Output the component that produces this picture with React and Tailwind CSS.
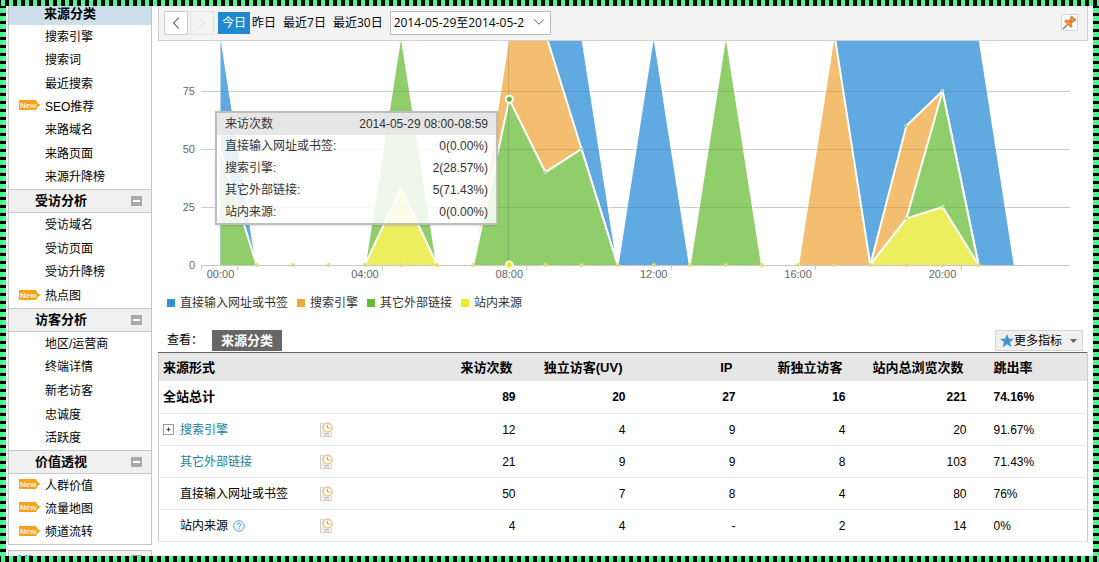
import { useState } from "react";
import { ChevronLeft, ChevronRight, ChevronDown } from "lucide-react";

const menu = [
  {
    title: "来源分类",
    active: true,
    listHeight: "h-[164px]",
    items: [
      { name: "搜索引擎" },
      { name: "搜索词" },
      { name: "最近搜索" },
      { name: "SEO推荐", isNew: true },
      { name: "来路域名" },
      { name: "来路页面" },
      { name: "来源升降榜" },
    ],
  },
  {
    title: "受访分析",
    listHeight: "h-[95px]",
    items: [
      { name: "受访域名" },
      { name: "受访页面" },
      { name: "受访升降榜" },
      { name: "热点图", isNew: true },
    ],
  },
  {
    title: "访客分析",
    listHeight: "h-[118px]",
    items: [
      { name: "地区/运营商" },
      { name: "终端详情" },
      { name: "新老访客" },
      { name: "忠诚度" },
      { name: "活跃度" },
    ],
  },
  {
    title: "价值透视",
    listHeight: "h-[70px]",
    items: [
      { name: "人群价值", isNew: true },
      { name: "流量地图", isNew: true },
      { name: "频道流转", isNew: true },
    ],
  },
];

const legend = [
  { name: "直接输入网址或书签", color: "bg-[#3490d6]" },
  { name: "搜索引擎", color: "bg-[#eda745]" },
  { name: "其它外部链接", color: "bg-[#68bb35]" },
  { name: "站内来源", color: "bg-[#ecec2c]" },
];

const tooltipRows = [
  ["直接输入网址或书签:", "0(0.00%)"],
  ["搜索引擎:", "2(28.57%)"],
  ["其它外部链接:", "5(71.43%)"],
  ["站内来源:", "0(0.00%)"],
];

const rows = [
  { name: "搜索引擎", link: true, expand: true, values: ["12", "4", "9", "4", "20", "91.67%"] },
  { name: "其它外部链接", link: true, values: ["21", "9", "9", "8", "103", "71.43%"] },
  { name: "直接输入网址或书签", values: ["50", "7", "8", "4", "80", "76%"] },
  { name: "站内来源", help: true, values: ["4", "4", "-", "2", "14", "0%"] },
];

const total = ["89", "20", "27", "16", "221", "74.16%"];
const columns = ["来访次数", "独立访客(UV)", "IP", "新独立访客", "站内总浏览次数", "跳出率"];

// stacked percentages, each point is [hour, top of the layer]
const layers = [
  { fill: "#61a9e1", points: [[0, 100], [1, 0]] },
  { fill: "#61a9e1", points: [[9, 100], [10, 100], [11, 0]] },
  { fill: "#61a9e1", points: [[11, 0], [12, 100], [13, 0]] },
  { fill: "#61a9e1", points: [[16, 0], [17, 100], [21, 100], [22, 0]] },
  { fill: "#f3be70", points: [[7, 0], [8, 100], [9, 100], [10, 50], [11, 0]] },
  { fill: "#f3be70", points: [[16, 0], [17, 100], [18, 0]] },
  { fill: "#f3be70", points: [[18, 0], [19, 60], [20, 75], [21, 0]] },
  { fill: "#90ce6b", points: [[0, 50], [1, 0]] },
  { fill: "#90ce6b", points: [[4, 0], [5, 100], [6, 0]] },
  { fill: "#90ce6b", points: [[7, 0], [8, 71.43], [9, 40], [10, 50], [11, 0]] },
  { fill: "#90ce6b", points: [[13, 0], [14, 100], [15, 0]] },
  { fill: "#90ce6b", points: [[18, 0], [19, 20], [20, 75], [21, 0]] },
  { fill: "#ecee5d", points: [[4, 0], [5, 33.3], [6, 0]] },
  { fill: "#ecee5d", points: [[18, 0], [19, 20], [20, 25], [21, 0]] },
];

const px = (hour) => 62.5 + hour * 36.1;
const py = (value) => 224 - value * 2.32;

function GridLines({ opacity }) {
  return [25, 50, 75].map((v) => (
    <line key={v} x1="43" x2="912" y1={Math.round(py(v)) + 0.5} y2={Math.round(py(v)) + 0.5} stroke="#000" strokeOpacity={opacity} />
  ));
}

function TrafficChart() {
  const line = (points) => points.map(([h, v]) => `${px(h)},${py(v)}`).join(" ");
  const area = (points) =>
    `${px(points[0][0])},${py(0)} ${line(points)} ${px(points[points.length - 1][0])},${py(0)}`;

  return (
    <svg viewBox="0 0 930 244" className="block w-full" role="img" aria-label="来访次数">
      <GridLines opacity="0.12" />
      {layers.map((layer, i) => (
        <g key={i}>
          <polygon points={area(layer.points)} fill={layer.fill} />
          <polyline points={line(layer.points)} fill="none" stroke="#fff" strokeWidth="2" />
        </g>
      ))}
      <GridLines opacity="0.1" />

      <line x1="43" x2="912" y1="224.5" y2="224.5" stroke="#c8c8c8" />
      <line x1="350.5" x2="350.5" y1="0" y2="224" stroke="#000" strokeOpacity="0.12" />

      {[43.5, 79.5, 224.5, 368.5, 513.5, 657.5, 803.5].map((x) => (
        <line key={x} x1={x} x2={x} y1="224" y2="229" stroke="#c8c8c8" />
      ))}

      {Array.from({ length: 21 }, (_, i) => (
        <circle key={i} cx={px(i + 1)} cy="224" r="2" fill="#e6d97c" />
      ))}

      {[[9, 40], [10, 50], [19, 60], [19, 20], [20, 75], [20, 25]].map(([h, v]) => (
        <circle key={`${h}-${v}`} cx={px(h)} cy={py(v)} r="1.5" fill="#9bcb7a" stroke="#fff" strokeOpacity="0.6" />
      ))}

      <circle cx={px(8)} cy={py(71.43)} r="3.5" fill="#63b438" stroke="#fff" strokeWidth="2" />
      <circle cx={px(8)} cy="224" r="3.5" fill="#e9e920" stroke="#fffde0" strokeWidth="2" />

      <g fill="#666" fontSize="11" fontFamily="Liberation Sans, sans-serif">
        {[0, 25, 50, 75].map((v) => (
          <text key={v} x="37" y={Math.round(py(v)) + 4} textAnchor="end">{v}</text>
        ))}
        {[0, 4, 8, 12, 16, 20].map((h) => (
          <text key={h} x={px(h)} y="237" textAnchor="middle">{`${String(h).padStart(2, "0")}:00`}</text>
        ))}
      </g>
    </svg>
  );
}

function NewBadge() {
  return (
    <svg width="22" height="11" viewBox="0 0 22 11" className="mb-0.5" aria-label="New">
      <path d="M0 0H17L19 3.5L22 5L19 6.5L17 10H0Z" fill="#f6a21d" />
      <text x="1" y="8" fontSize="8" fontWeight="bold" fill="#fff4d8" fontFamily="Liberation Sans, sans-serif">New</text>
    </svg>
  );
}

function HistoryIcon() {
  return (
    <svg width="13" height="16" viewBox="0 0 13 16" fill="none" aria-hidden="true">
      <path d="M3.5 1.5H0.5V14.5H11.5V10.5" stroke="#d3cac3" />
      <path d="M2.5 13V3" stroke="#e3dcd6" />
      <path d="M4 11.5H9M4 13H9" stroke="#cbbfb6" />
      <circle cx="7.5" cy="5.5" r="4.5" fill="#fff8ec" stroke="#ecc592" strokeWidth="1.4" />
      <path d="M7.5 3V6H9.8" stroke="#d9985a" />
    </svg>
  );
}

function Collapse() {
  return (
    <svg width="11" height="10" viewBox="0 0 11 10" aria-hidden="true">
      <rect width="11" height="10" fill="#a9a9a9" />
      <rect x="2" y="4" width="7" height="2" fill="#fff" />
    </svg>
  );
}

function Sidebar() {
  return (
    <aside className="w-36 shrink-0">
      <nav className="border-x border-b border-[#c4c4c4]">
        {menu.map((section) => (
          <section key={section.title}>
            {section.active ? (
              <h2 className="h-[19px] bg-[#cddfea] pl-[35px] text-[13px] leading-[15px] font-bold">{section.title}</h2>
            ) : (
              <h2 className="flex h-6 items-center justify-between border-y border-[#c8c8c8] bg-[#f0f0f0] pr-[9px] pl-[26px] text-[13px] font-bold">
                {section.title}
                <button type="button" aria-label={`收起${section.title}`}><Collapse /></button>
              </h2>
            )}
            <ul className={`grid auto-rows-fr ${section.listHeight}`}>
              {section.items.map((item) => (
                <li key={item.name} className="flex items-center pl-2.5">
                  <span className="w-[26px] shrink-0">{item.isNew && <NewBadge />}</span>
                  <a href="#" className="leading-4">{item.name}</a>
                </li>
              ))}
            </ul>
          </section>
        ))}
      </nav>
      <div className="mt-[5px] flex h-6 justify-between border border-[#c4c4c4] bg-[#f0f0f0] px-[9px] pt-1">
        <svg width="16" height="12" viewBox="0 0 16 12" fill="none" stroke="#3a9bd0" strokeWidth="2" aria-hidden="true">
          <path d="M1 0L5 4L9 0M9 4L13 0" />
        </svg>
        <Collapse />
      </div>
    </aside>
  );
}

function Toolbar() {
  const [range, setRange] = useState("今日");
  const ranges = ["今日", "昨日", "最近7日", "最近30日"];

  return (
    <div className="flex h-[35px] items-center border-x border-b border-[#d0d0d0] bg-[#f3f3f3] pr-[9px] pl-[5px] font-['Open_Sans','Noto_Sans_CJK_SC',sans-serif]">
      <button type="button" aria-label="前一天" className="flex h-6 w-6 items-center justify-center border border-[#ccc] bg-white text-[#444]">
        <ChevronLeft size={20} strokeWidth={1.25} />
      </button>
      <button type="button" aria-label="后一天" disabled className="ml-0.5 flex h-6 w-6 items-center justify-center border border-[#e2e2e2] text-[#ddd]">
        <ChevronRight size={20} strokeWidth={1.25} />
      </button>
      <div className="ml-1 flex">
        {ranges.map((name) => (
          <button
            key={name}
            type="button"
            onClick={() => setRange(name)}
            className={`h-[22px] leading-[22px] ${range === name ? "mr-0.5 bg-[#2189d2] px-1 text-white" : "mr-[7px]"}`}
          >
            {name}
          </button>
        ))}
      </div>
      <div className="relative w-[161px]">
        <select aria-label="日期范围" className="h-6 w-full appearance-none border border-[#bbb] bg-white pl-[3px] text-xs">
          <option>2014-05-29至2014-05-2</option>
        </select>
        <ChevronDown size={18} strokeWidth={1.25} className="pointer-events-none absolute top-0.5 right-[3px] text-[#444]" />
      </div>
      <button type="button" aria-label="固定" className="mb-0.5 ml-auto border border-[#d3d9de] bg-white">
        <svg width="15" height="15" viewBox="0 0 15 15" aria-hidden="true">
          <path d="M1 14L5.5 9.5" stroke="#8a6a50" strokeWidth="1.3" />
          <path d="M9.5 1L14 5L12.5 6.2L11.5 6L9.5 8.5L10 11.5L9 12.5L6 9.5L2.5 6L4 5L6.8 5.4L9 3.2L8.4 2Z" fill="#ee7f22" stroke="#c9621a" strokeWidth="0.6" />
          <path d="M5 6.4L8.6 9.8M9.8 3.5L11.6 5.3" stroke="#fbc68c" strokeWidth="0.8" />
        </svg>
      </button>
    </div>
  );
}

function Tooltip() {
  return (
    <div className="absolute top-[70px] left-[57px] w-[283px] border-2 border-[#bdbdbd] bg-white/85 text-[#333] shadow-sm">
      <div className="flex h-[22px] items-center justify-between bg-[#e6e6e6] px-2">
        <span>来访次数</span>
        <span>2014-05-29 08:00-08:59</span>
      </div>
      {tooltipRows.map(([name, value]) => (
        <div key={name} className="flex h-[22px] items-center justify-between px-2">
          <span>{name}</span>
          <span>{value}</span>
        </div>
      ))}
    </div>
  );
}

function SourceTable() {
  return (
    <table className="w-full table-fixed border-x border-t border-x-[#ccc] border-t-[#666] text-right">
      <colgroup>
        <col />
        <col className="w-[106px]" />
        <col className="w-[110px]" />
        <col className="w-[110px]" />
        <col className="w-[110px]" />
        <col className="w-[110px]" />
        <col className="w-[121px]" />
        <col className="w-[110px]" />
      </colgroup>
      <thead>
        <tr className="h-7 bg-[#e6e6e6] text-[13px]">
          <th colSpan={2} className="pt-0.5 pl-1 text-left">来源形式</th>
          {columns.map((name, i) => (
            <th key={name} className={i === 5 ? "pt-0.5 pl-4 text-left" : "pt-0.5 pr-3.5"}>{name}</th>
          ))}
        </tr>
      </thead>
      <tbody>
        <tr className="h-[33px] border-b border-[#e8e8e8] font-bold">
          <th colSpan={2} scope="row" className="pl-1 text-left text-[13px]">全站总计</th>
          {total.map((value, i) => (
            <td key={i} className={i === 5 ? "pl-4 text-left" : "pr-[11px]"}>{value}</td>
          ))}
        </tr>
        {rows.map((row) => (
          <tr key={row.name} className="h-8 border-b border-[#e8e8e8]">
            <th scope="row" className="text-left font-normal">
              <div className="flex items-center pl-1">
                <span className="w-[17px] shrink-0">
                  {row.expand && (
                    <button type="button" aria-label="展开" className="block">
                      <svg width="11" height="11" viewBox="0 0 11 11" fill="none" stroke="#999">
                        <rect x="0.5" y="0.5" width="10" height="10" />
                        <path d="M3.5 5.5H7.5M5.5 3.5V7.5" stroke="#444" />
                      </svg>
                    </button>
                  )}
                </span>
                {row.link ? <a href="#" className="text-[#18829f]">{row.name}</a> : row.name}
                {row.help && (
                  <svg width="12" height="12" viewBox="0 0 12 12" fill="none" className="ml-[5px]" aria-label="帮助">
                    <circle cx="6" cy="6" r="5.3" fill="#eef7fd" stroke="#63a8d8" />
                    <path d="M4.3 4.8C4.3 2.6 7.8 2.7 7.7 4.7C7.6 5.9 6 5.8 6 7.4M6 8.4V9.5" stroke="#3f86c0" />
                  </svg>
                )}
              </div>
            </th>
            <td className="pl-2.5"><HistoryIcon /></td>
            {row.values.map((value, i) => (
              <td key={i} className={i === 5 ? "pl-4 text-left" : "pr-[11px]"}>{value}</td>
            ))}
          </tr>
        ))}
      </tbody>
    </table>
  );
}

function App() {
  return (
    <div className="flex h-screen flex-col overflow-hidden bg-white font-['Liberation_Sans','Noto_Sans_CJK_SC',sans-serif] text-xs text-black">
      <div className="h-1.5 shrink-0 bg-[repeating-linear-gradient(90deg,#000_0_1px,#4df58f_1px_5px,#000_5px_8px)]" />
      <div className="flex min-h-0 flex-1">
        <div className="w-1.5 shrink-0 bg-[repeating-linear-gradient(180deg,#000_0_2px,#4df58f_2px_7px,#000_7px_8px)]" />
        <div className="flex min-w-0 flex-1 gap-1.5 overflow-hidden pr-[5px] pl-0.5">
          <Sidebar />
          <main className="min-w-0 flex-1">
            <Toolbar />
            <div className="relative">
              <TrafficChart />
              <Tooltip />
            </div>
            <ul className="flex h-9 items-center gap-[9px] pl-[9px] text-[#333]">
              {legend.map((item) => (
                <li key={item.name} className="flex items-center gap-[5px]">
                  <span className={`h-2 w-2 ${item.color}`} />
                  {item.name}
                </li>
              ))}
            </ul>
            <div className="flex h-[31px] items-end pr-[5px] pb-px pl-[9px]">
              <span className="w-[45px] leading-[21px]">查看：</span>
              <button type="button" className="h-[21px] bg-[#666] px-[9px] text-[13px] font-bold text-white">来源分类</button>
              <button type="button" className="ml-auto flex h-[21px] items-center border border-[#d4d4d4] bg-[#f0f0f0] px-1">
                <svg width="14" height="14" viewBox="0 0 14 14" aria-hidden="true">
                  <path d="M7 0L9 4.8H14L10 8L11.4 13.2L7 10.2L2.6 13.2L4 8L0 4.8H5Z" fill="#3c94d1" />
                </svg>
                更多指标
                <svg width="7" height="4" viewBox="0 0 7 4" className="mr-px ml-2" aria-hidden="true">
                  <path d="M0 0H7L3.5 4Z" fill="#666" />
                </svg>
              </button>
            </div>
            <SourceTable />
          </main>
        </div>
        <div className="w-1.5 shrink-0 bg-[repeating-linear-gradient(180deg,#000_0_2px,#4df58f_2px_7px,#000_7px_8px)]" />
      </div>
      <div className="h-1.5 shrink-0 bg-[repeating-linear-gradient(90deg,#000_0_1px,#4df58f_1px_5px,#000_5px_8px)]" />
    </div>
  );
}

export default App;
